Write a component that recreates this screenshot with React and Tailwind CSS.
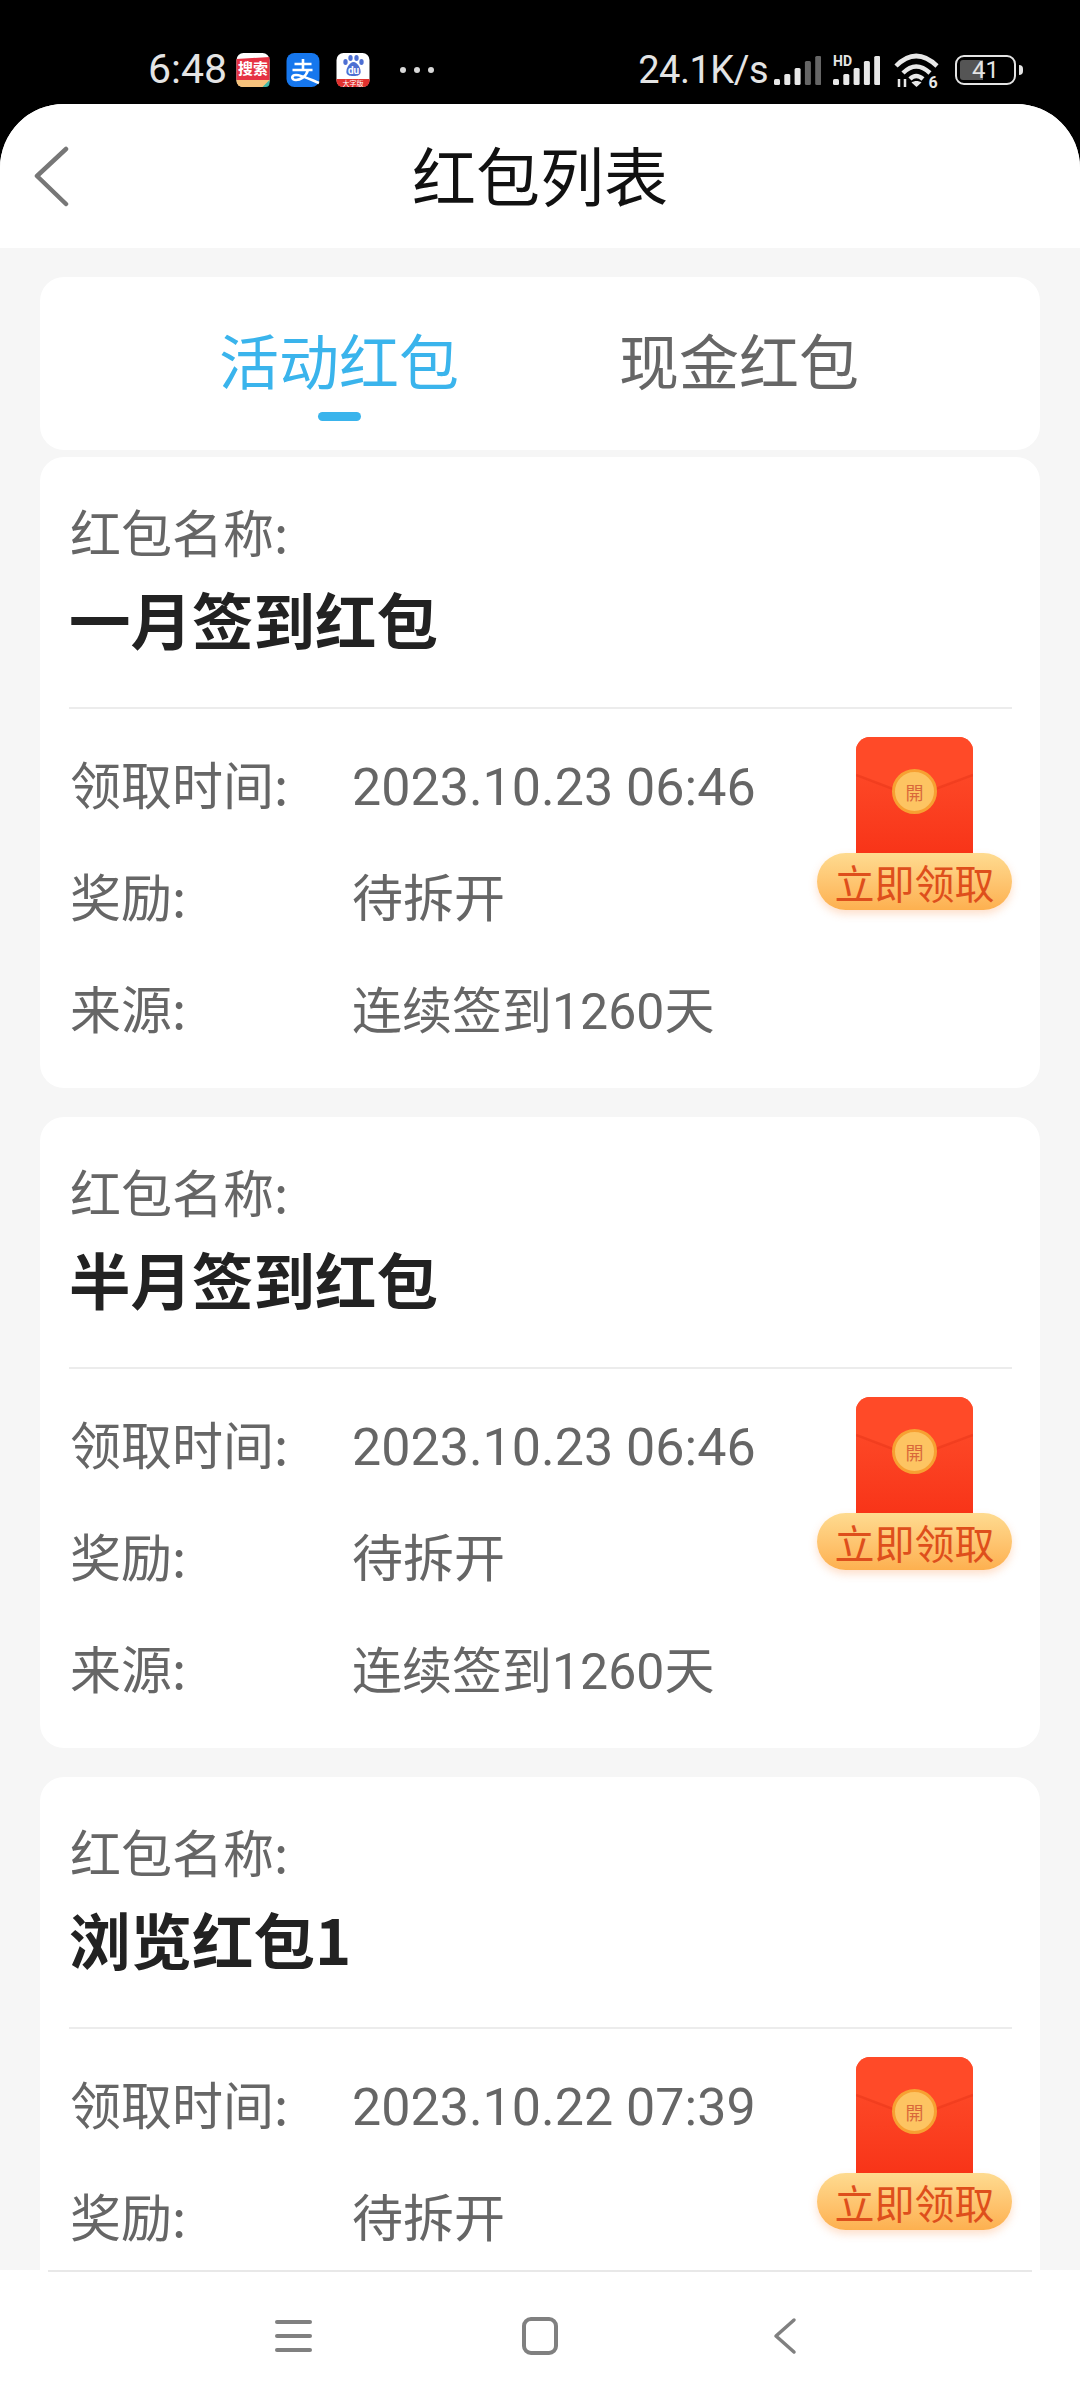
const packets = [
  { title: '一月签到红包', time: '2023.10.23 06:46', source: '连续签到1260天' },
  { title: '半月签到红包', time: '2023.10.23 06:46', source: '连续签到1260天' },
  // third card runs under the bottom nav, its source row is out of view
  { title: '浏览红包1', time: '2023.10.22 07:39' },
]

function SignalBars({ dim }) {
  const heights = [6, 11, 17, 24, 29]
  return (
    <svg width="47" height="30" viewBox="0 0 47 30">
      {heights.map((h, i) => (
        <rect
          key={i}
          x={i * 10.3}
          y={30 - h}
          width="6"
          height={h}
          rx="1.5"
          fill={dim && i > 2 ? '#666666' : '#e8e8e8'}
        />
      ))}
    </svg>
  )
}

function StatusBar() {
  return (
    <div className="h-[104px] bg-black flex items-center pt-[36px] pl-[148px] pr-[57px] text-[#e4e4e4] text-[38px] font-['Roboto',sans-serif]">
      <span className="w-[88px] text-[41px]">6:48</span>
      <svg width="34" height="34" viewBox="0 0 33 34">
        <rect width="33" height="34" rx="7" fill="#ffffff" />
        <path d="M0 6l33-2v23H0z" fill="#e63244" />
        <path d="M0 27h33v1a6 6 0 0 1-6 6H6a6 6 0 0 1-6-6z" fill="#f7c27c" />
        <path d="M26 34l7-7v3a4 4 0 0 1-4 4z" fill="#3fb8a8" />
        <text x="16.5" y="21" fontSize="15" fontWeight="700" fill="#ffffff" textAnchor="middle" fontFamily="Noto Sans CJK SC">搜索</text>
      </svg>
      <svg className="ml-[16px]" width="34" height="34" viewBox="0 0 33 34">
        <rect width="33" height="34" rx="8" fill="#1677ee" />
        <path d="M8 11h17M16.500 6v11M6 17h20M21.500 17c-2 7-8 10-12 10-5 0-5-5 0-5 5 0 11 3 23 8" fill="none" stroke="#ffffff" strokeWidth="2.6" />
      </svg>
      <svg className="ml-[16px]" width="34" height="34" viewBox="0 0 33 34">
        <rect width="33" height="34" rx="7" fill="#ffffff" />
        <path d="M0 26h33v2a6 6 0 0 1-6 6H6a6 6 0 0 1-6-6z" fill="#e1312e" />
        <text x="16.500" y="33" fontSize="7" fill="#ffffff" textAnchor="middle" fontFamily="Noto Sans CJK SC">大字版</text>
        <g fill="#4d6fd3">
          <ellipse cx="9" cy="9" rx="2.200" ry="3" />
          <ellipse cx="14" cy="5" rx="2.200" ry="3" />
          <ellipse cx="20" cy="5" rx="2.200" ry="3" />
          <ellipse cx="25" cy="9" rx="2.200" ry="3" />
          <path d="M17 9c4 0 8 7 7 11-1 3-5 3-7 3s-6 0-7-3c-1-4 3-11 7-11z" />
        </g>
        <text x="17" y="21" fontSize="10" fontWeight="700" fill="#ffffff" textAnchor="middle" fontFamily="Roboto">du</text>
      </svg>
      <div className="ml-[30px] flex gap-[8px]">
        <div className="w-[6px] h-[6px] rounded-full bg-[#d8d8d8]" />
        <div className="w-[6px] h-[6px] rounded-full bg-[#d8d8d8]" />
        <div className="w-[6px] h-[6px] rounded-full bg-[#d8d8d8]" />
      </div>
      <span className="ml-auto tracking-[-0.5px]">24.1K/s</span>
      <div className="ml-[6px]"><SignalBars dim /></div>
      <div className="ml-[12px] relative">
        <span className="absolute -top-[1px] left-0 text-[14px] leading-none font-bold">HD</span>
        <SignalBars />
      </div>
      <svg className="ml-[13px]" width="47" height="44" viewBox="0 -3 47 44">
        <path d="M3 15Q23 -5 44 15M10 22Q23 9 37 22M17 28Q23 22 30 28" fill="none" stroke="#e8e8e8" strokeWidth="4.500" />
        <path d="M23.500 36l-5-4.500c3-2 7-2 10 0z" fill="#e8e8e8" />
        <path d="M6 28v8M12 28v8" fill="none" stroke="#e8e8e8" strokeWidth="2.500" />
        <text x="40" y="37" fontSize="16" fontWeight="700" fill="#e8e8e8" textAnchor="middle" fontFamily="Roboto">6</text>
      </svg>
      <div className="ml-[15px] flex items-center gap-[3px]">
        <div className="w-[61px] h-[30px] rounded-[9px] border-[2.5px] border-[#e4e4e4] p-[3px] relative flex">
          <div className="w-[45%] bg-[#555555] rounded-l-[3px]" />
          <span className="absolute inset-0 flex items-center justify-center text-[24px] leading-none">41</span>
        </div>
        <div className="w-[4px] h-[10px] rounded-r-full bg-[#e4e4e4]" />
      </div>
    </div>
  )
}

function InfoRow({ label, value, valueClass }) {
  return (
    <div className="h-[112px] flex items-baseline pt-[30px]">
      <span className="w-[283px] pl-[1px]">{label}</span>
      <span className={`font-['Roboto','Noto_Sans_CJK_SC',sans-serif] ${valueClass}`}>{value}</span>
    </div>
  )
}

function RedPacket() {
  return (
    <div className="flex flex-col items-center">
      <div className="w-[117px] h-[116px] rounded-t-[14px] bg-gradient-to-b from-[#ff4f2c] to-[#f83418] relative overflow-hidden">
        <svg className="absolute inset-0" width="117" height="116" viewBox="0 0 117 116">
          <path d="M0 0h117v38l-58 22L0 38z" fill="#ff4a28" />
          <path d="M0 38l58 22 59-22" fill="none" stroke="#ec3a1c" strokeWidth="2.500" opacity="0.7" />
        </svg>
        <div className="absolute left-[36px] top-[32px] w-[45px] h-[45px] rounded-full bg-[#fdc462] border-[3px] border-[#f7a032] flex items-center justify-center text-[18px] leading-none text-[#d9683a] font-['Noto_Sans_CJK_TC',serif]">
          開
        </div>
      </div>
      <div className="w-[195px] h-[57px] rounded-full bg-gradient-to-b from-[#fedb90] to-[#fdb04f] shadow-[0_4px_8px_rgba(253,150,80,0.3)] flex items-center justify-center text-[40px] text-[#de4f1c] leading-none">
        立即领取
      </div>
    </div>
  )
}

function PacketCard({ title, time, source }) {
  return (
    <div className="shrink-0 bg-white rounded-[24px] h-[631px] pl-[29px] pr-[28px] text-[#666666] text-[51px] leading-none">
      <div className="h-[252px] border-b-2 border-[#ececec] pt-[46px]">
        <div className="h-[56px] pl-[1px] flex items-center">红包名称:</div>
        <div className="mt-[29px] h-[62px] flex items-center text-[61.5px] font-semibold text-[#222222]">{title}</div>
      </div>
      <div className="flex pt-[19px]">
        <div className="flex-1">
          <InfoRow label="领取时间:" value={time} valueClass="text-[52px]" />
          <InfoRow label="奖励:" value="待拆开" valueClass="text-[51px]" />
          {source && <InfoRow label="来源:" value={source} valueClass="text-[50px]" />}
        </div>
        <div className="pt-[9px]">
          <RedPacket />
        </div>
      </div>
    </div>
  )
}

function BottomNav() {
  return (
    <div className="h-[130px] shrink-0 bg-white px-[48px]">
      <div className="h-full border-t-2 border-[#e8e8e8] flex items-center justify-center gap-[210px]">
        <div className="flex flex-col gap-[10px] w-[37px]">
          <div className="h-[4px] bg-[#808080] rounded-full" />
          <div className="h-[4px] bg-[#808080] rounded-full" />
          <div className="h-[4px] bg-[#808080] rounded-full" />
        </div>
        <div className="w-[36px] h-[38px] rounded-[9px] border-[4px] border-[#808080]" />
        <svg width="37" height="38" viewBox="0 0 37 38">
          <path d="M26 3L8 19l18 16" fill="none" stroke="#808080" strokeWidth="3.500" strokeLinecap="round" strokeLinejoin="round" />
        </svg>
      </div>
    </div>
  )
}

export default function App() {
  return (
    <div className="w-[1080px] h-[2400px] bg-black overflow-hidden flex flex-col font-['Noto_Sans_CJK_SC','Roboto',sans-serif]">
      <StatusBar />
      <div className="flex-1 min-h-0 rounded-t-[64px] overflow-hidden bg-[#f6f6f6] flex flex-col">
        <div className="h-[144px] shrink-0 bg-white flex items-center justify-center relative pb-[6px]">
          <svg className="absolute left-[33px] top-[42px]" width="38" height="62" viewBox="0 0 38 62">
            <path d="M33 3L4 30l29 28" fill="none" stroke="#777777" strokeWidth="4.500" strokeLinecap="round" strokeLinejoin="round" />
          </svg>
          <h1 className="text-[64px] text-[#111111] leading-none">红包列表</h1>
        </div>
        <div className="flex-1 min-h-0 overflow-hidden px-[40px] pt-[29px]">
          <div className="bg-white rounded-[24px] h-[173px] flex justify-center gap-[160px] pt-[37px] pr-[2px] text-[60px] leading-none">
            <div className="flex flex-col items-center">
              <span className="text-[#3ab4ec] h-[90px] flex items-center">活动红包</span>
              <div className="w-[43px] h-[9px] rounded-full bg-[#3ab4ec] mt-[8px]" />
            </div>
            <span className="text-[#666666] h-[90px] flex items-center">现金红包</span>
          </div>
          <div className="mt-[7px] flex flex-col gap-[29px]">
            {packets.map((p, i) => (
              <PacketCard key={i} title={p.title} time={p.time} source={p.source} />
            ))}
          </div>
        </div>
      </div>
      <BottomNav />
    </div>
  )
}
